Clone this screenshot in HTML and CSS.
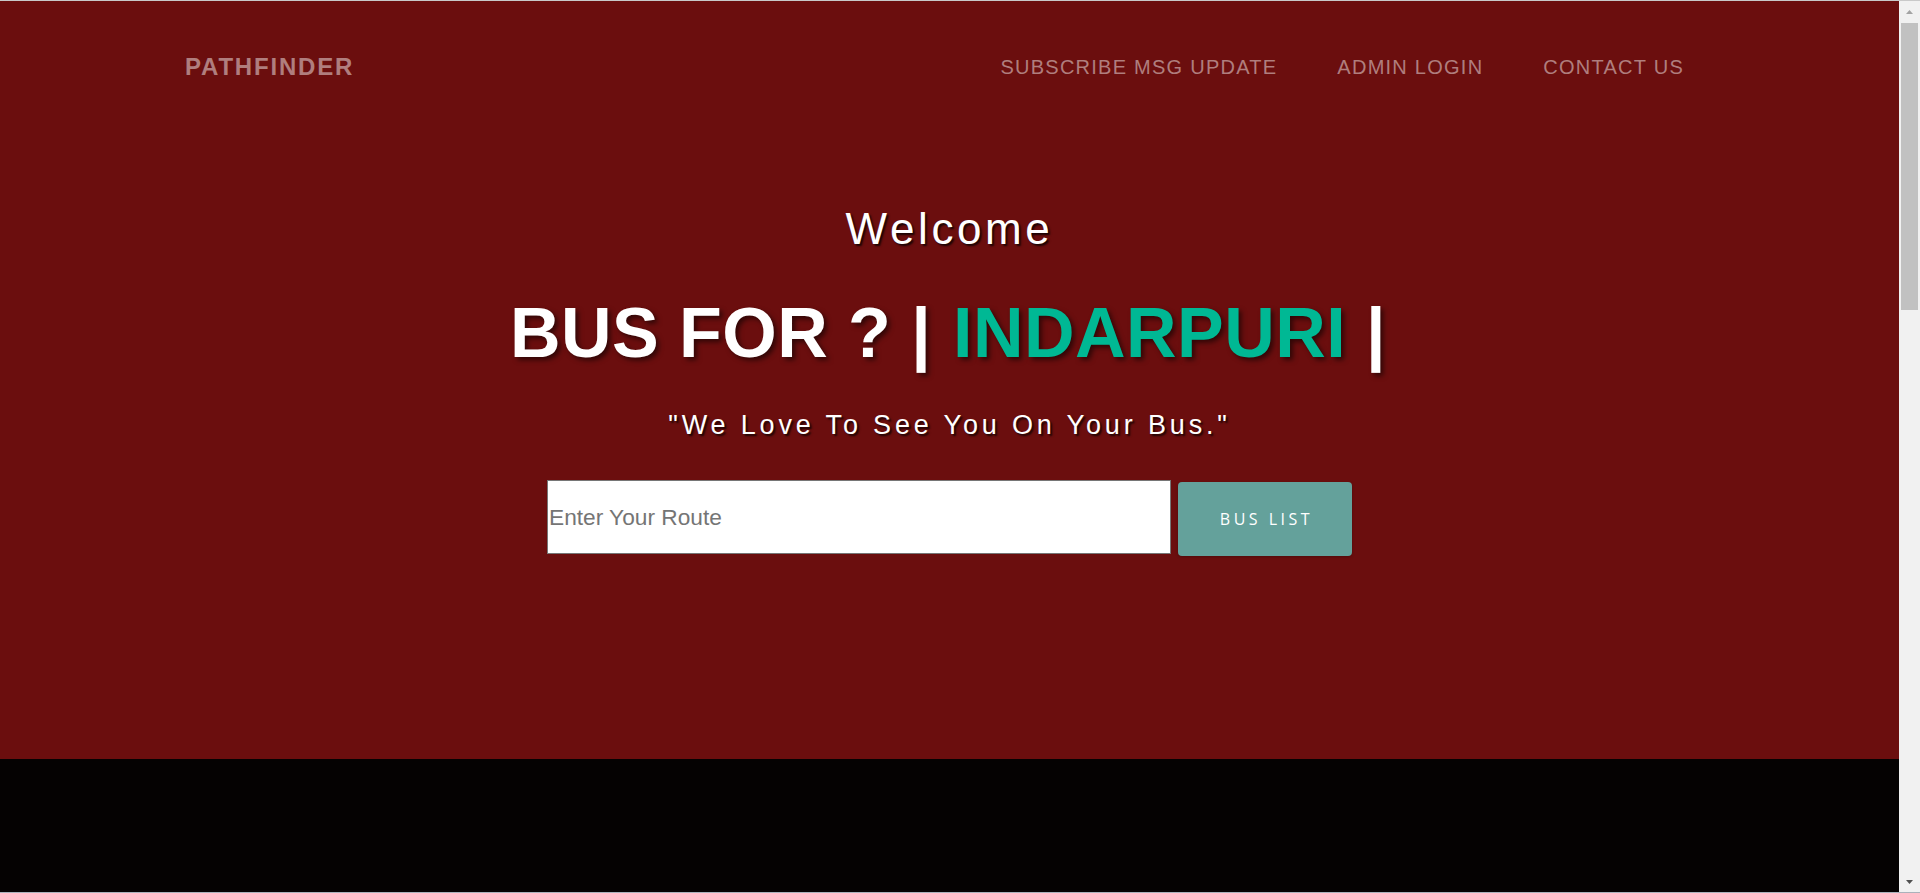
FILE: index.html
```html
<!DOCTYPE html>
<html lang="en">
<head>
<meta charset="utf-8">
<title>Pathfinder</title>
<link rel="stylesheet" href="styles.css">
</head>
<body>
<div class="window">
  <main class="page">
    <section class="hero">
      <header class="topbar">
        <a class="brand" href="#">PATHFINDER</a>
        <nav class="menu">
          <a class="menu-link" href="#">SUBSCRIBE MSG UPDATE</a>
          <a class="menu-link" href="#">ADMIN LOGIN</a>
          <a class="menu-link" href="#">CONTACT US</a>
        </nav>
      </header>
      <div class="intro">
        <h2 class="welcome">Welcome</h2>
        <h1 class="headline">BUS FOR ? | <span class="place">INDARPURI</span> <span class="cursor">|</span></h1>
        <p class="quote">"We Love To See You On Your Bus."</p>
        <form class="search">
          <input type="text" class="route" placeholder="Enter Your Route">
          <button type="button" class="btn">BUS LIST</button>
        </form>
      </div>
    </section>
    <section class="dark"></section>
  </main>
  <div class="scrollbar" aria-hidden="true">
    <div class="sb-btn sb-up">
      <svg width="7" height="4" viewBox="0 0 7 4"><path d="M3.5 0 L7 4 L0 4 Z" fill="#a3a3a3"/></svg>
    </div>
    <div class="sb-thumb"></div>
    <div class="sb-track"></div>
    <div class="sb-btn sb-down">
      <svg width="7" height="4" viewBox="0 0 7 4"><path d="M0 0 L7 0 L3.5 4 Z" fill="#505050"/></svg>
    </div>
  </div>
</div>
</body>
</html>
```

FILE: styles.css
```css
html, body {
  margin: 0;
  padding: 0;
  height: 893px;
  overflow: hidden;
}

body {
  font-family: "Liberation Sans", Arial, sans-serif;
  background: #050202;
}

.window {
  box-sizing: border-box;
  height: 893px;
  display: flex;
  border-top: 1px solid #c9c9c9;
  border-bottom: 1px solid #aab2bb;
}

.page {
  flex: 1;
  display: flex;
  flex-direction: column;
  min-width: 0;
}

.hero {
  height: 758px;
  background: #6b0e0e;
  display: flex;
  flex-direction: column;
}

.topbar {
  height: 132px;
  display: flex;
  align-items: center;
  justify-content: space-between;
  padding: 0 186px 0 185px;
}

.brand {
  font-size: 24px;
  font-weight: 700;
  letter-spacing: 1.8px;
  color: rgba(255, 255, 255, 0.47);
  text-decoration: none;
  line-height: 1;
}

.menu {
  display: flex;
  align-items: center;
}

.menu-link {
  font-size: 20px;
  letter-spacing: 1.25px;
  color: rgba(255, 255, 255, 0.47);
  text-decoration: none;
  padding: 0 30px;
  line-height: 1;
}

.menu-link:first-child {
  padding-left: 0;
}

.menu-link:last-child {
  padding-right: 29px;
}

.intro {
  display: flex;
  flex-direction: column;
  align-items: center;
  color: #fff;
}

.welcome {
  margin: 74px 0 0;
  font-size: 44px;
  font-weight: 400;
  line-height: 44px;
  letter-spacing: 3.6px;
  text-shadow: 2px 2px 2px rgba(0, 0, 0, 0.75);
}

.headline {
  margin: 47px 0 0;
  font-size: 70px;
  font-weight: 700;
  line-height: 70px;
  letter-spacing: 0.45px;
  text-shadow: 3px 3px 5px rgba(0, 0, 0, 0.55);
  padding-right: 3px;
}

.place {
  color: #00b894;
  margin-left: 2px;
}

.quote {
  margin: 44px 0 0;
  font-size: 27px;
  line-height: 27px;
  letter-spacing: 3.85px;
  text-shadow: 2px 2px 2px rgba(0, 0, 0, 0.75);
}

.search {
  margin: 41px 0 0;
  display: flex;
  align-items: flex-start;
}

.route {
  box-sizing: border-box;
  width: 624px;
  height: 74px;
  margin: 0;
  padding: 0 1px;
  border: 1px solid #767676;
  border-radius: 0;
  background: #fff;
  font-family: "Liberation Sans", Arial, sans-serif;
  font-size: 22.7px;
  color: #333;
  outline: none;
}

.route::placeholder {
  color: #757575;
}

.btn {
  box-sizing: border-box;
  width: 174px;
  height: 74px;
  margin: 2px 0 0 7px;
  padding: 0 0 0 3px;
  border: none;
  border-radius: 4px;
  background: #64a19b;
  color: #fff;
  font-family: "Open Sans", sans-serif;
  font-size: 16px;
  font-weight: 400;
  letter-spacing: 3.5px;
  box-shadow: 0 1px 3px rgba(0, 0, 0, 0.25);
  cursor: pointer;
}

.dark {
  flex: 1;
  background: #050202;
}

.scrollbar {
  width: 21px;
  flex: none;
  background: #f1f1f1;
  display: flex;
  flex-direction: column;
}

.sb-btn {
  flex: none;
  display: flex;
  align-items: center;
  justify-content: center;
}

.sb-up {
  height: 22px;
}

.sb-down {
  height: 21px;
}

.sb-thumb {
  height: 287px;
  margin: 0 2px;
  background: #c1c1c1;
  flex: none;
}

.sb-track {
  flex: 1;
}
```
